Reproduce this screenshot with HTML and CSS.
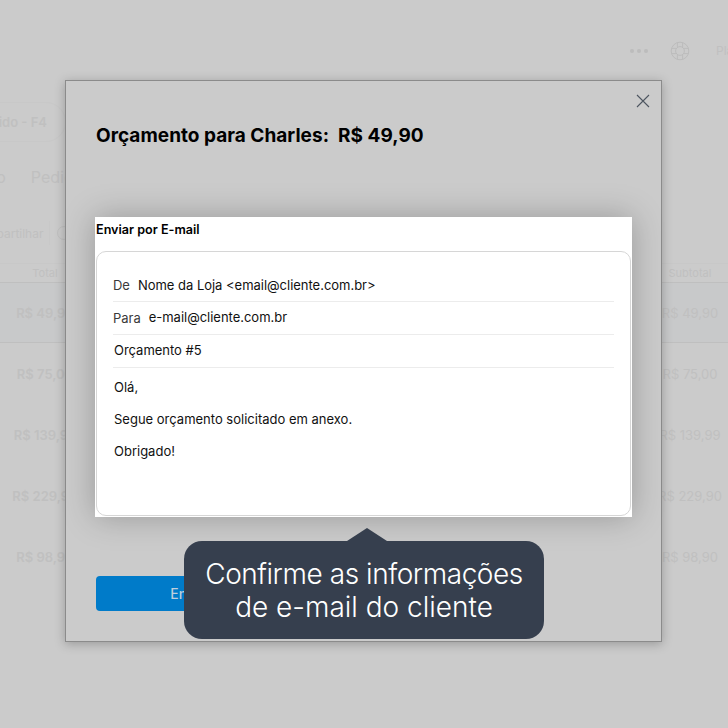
FILE: index.html
```html
<!DOCTYPE html>
<html lang="en">
<head>
	<meta charset="utf-8" />
	<title>Enviar por E-mail</title>
	<link rel="stylesheet" href="styles.css">
</head>
<body>

<!-- app behind the modal, mostly hidden -->
<div class="app">
	<div class="topbar">
		<div class="dots"><span></span><span></span><span></span></div>
		<svg class="buoy" width="20" height="20" viewBox="0 0 20 20" fill="none" stroke="#bcbcbc" stroke-width="1">
			<circle cx="10" cy="10" r="8.8" />
			<circle cx="10" cy="10" r="4.4" />
			<path d="M7.4 6.4V1.6M12.6 6.4V1.6M7.4 13.6v4.8M12.6 13.6v4.8M6.4 7.4H1.6M6.4 12.6H1.6M13.6 7.4h4.8M13.6 12.6h4.8" />
		</svg>
		<span class="plan">Plano</span>
	</div>

	<div class="pill">Novo Pedido - F4</div>

	<div class="tabs">
		<span>Orçamento</span>
		<span>Pedidos</span>
	</div>

	<div class="tools">
		<span>Compartilhar</span>
		<i class="sep"></i>
		<i class="circle"></i>
	</div>

	<div class="row head"><span class="cell">Total</span><span class="cell">Subtotal</span></div>
	<div class="row first"><span class="cell">R$ 49,90</span><span class="cell">R$ 49,90</span></div>
	<div class="row"><span class="cell">R$ 75,00</span><span class="cell">R$ 75,00</span></div>
	<div class="row"><span class="cell">R$ 139,99</span><span class="cell">R$ 139,99</span></div>
	<div class="row"><span class="cell">R$ 229,90</span><span class="cell">R$ 229,90</span></div>
	<div class="row"><span class="cell">R$ 98,90</span><span class="cell">R$ 98,90</span></div>
</div>

<div class="modal">
	<svg class="close" width="14" height="14" viewBox="0 0 14 14" fill="none" stroke="#4d5560" stroke-width="1.1">
		<path d="M1 1l12 12M13 1L1 13" />
	</svg>

	<h2>Orçamento para Charles:&nbsp; R$ 49,90</h2>

	<div class="card">
		<h3>Enviar por E-mail</h3>
		<div class="mail">
			<div class="line"><span class="label">De</span>Nome da Loja &lt;email@cliente.com.br&gt;</div>
			<div class="line"><span class="label low">Para</span>e-mail@cliente.com.br</div>
			<div class="line">Orçamento #5</div>
			<div class="msg">
				<p>Olá,</p>
				<p>Segue orçamento solicitado em anexo.</p>
				<p>Obrigado!</p>
			</div>
		</div>
	</div>

	<button type="button" class="send">Enviar</button>
</div>

<div class="tip"><span class="tip-first">Confirme as informações</span><br />de e-mail do cliente</div>

</body>
</html>
```

FILE: styles.css
```css
* {
	box-sizing: border-box;
}

html, body {
	margin: 0;
	height: 728px;
	overflow: hidden;
}

body {
	position: relative;
	background: #cbcbcb;
	font-family: Inter, "Liberation Sans", sans-serif;
}

/* background app */
.app {
	height: 728px;
	color: #c0c0c0;
	overflow: hidden;
}

.topbar {
	height: 102px;
	padding-top: 41px;
	display: flex;
	align-items: flex-start;
	justify-content: flex-end;
	margin-right: -50px;
}

.dots {
	display: flex;
	gap: 3px;
	margin-top: 8px;
	margin-right: 22px;
}

.dots span {
	width: 4px;
	height: 4px;
	border-radius: 50%;
	background: #bcbcbc;
}

.buoy {
	margin-right: 26px;
}

.plan {
	font-size: 12px;
	line-height: 20px;
	width: 62px;
}

.pill {
	width: 166px;
	height: 40px;
	margin-left: -100px;
	padding-right: 18px;
	border: 1px solid #c8c8c8;
	border-radius: 20px;
	font-size: 13px;
	font-weight: 600;
	line-height: 38px;
	text-align: right;
}

.tabs {
	display: flex;
	gap: 25px;
	height: 34px;
	margin-top: 17px;
	margin-left: -78px;
	font-size: 16px;
	line-height: 36px;
}

.tools {
	display: flex;
	align-items: center;
	height: 40px;
	margin-top: 20px;
	margin-left: -30px;
	font-size: 12px;
}

.sep {
	width: 1px;
	height: 24px;
	margin-left: 6px;
	background: #c8c8c8;
}

.circle {
	width: 14px;
	height: 14px;
	margin-left: 7px;
	border: 1.5px solid #c0c0c0;
	border-radius: 50%;
}

.row {
	display: flex;
	justify-content: space-between;
	height: 61px;
	align-items: center;
	font-size: 13px;
}

.cell {
	width: 90px;
	text-align: center;
	white-space: nowrap;
}

.cell:last-child {
	width: 76px;
}

.row .cell:first-child {
	font-weight: 600;
}

.row.head {
	height: 20px;
	margin-top: 10px;
	font-size: 11px;
	border-top: 1px solid #c8c8c8;
	border-bottom: 1px solid #bfbfbf;
}

.row.head .cell:first-child {
	font-weight: 400;
}

.row.first {
	height: 60px;
	background: #c8c9ca;
	border-bottom: 1px solid #bfbfbf;
}

/* modal */
.modal {
	position: absolute;
	left: 65px;
	top: 80px;
	width: 597px;
	height: 562px;
	padding: 43px 30px 0;
	background: #cbcbcb;
	border: 1px solid #8b8b8b;
	box-shadow: 0 2px 10px rgba(0,0,0,.25);
}

.close {
	position: absolute;
	right: 11px;
	top: 13px;
}

.modal h2 {
	margin: 0;
	color: #000;
	font-size: 19px;
	font-weight: 700;
	letter-spacing: .03px;
	line-height: 24px;
}

.card {
	width: 537px;
	height: 300px;
	margin-top: 69px;
	margin-left: -1px;
	background: #fff;
	box-shadow: 0 0 30px rgba(0,0,0,.25);
}

.card h3 {
	margin: 0;
	height: 34px;
	padding-left: 1px;
	color: #000;
	font-size: 12.6px;
	font-weight: 600;
	line-height: 25px;
}

.mail {
	width: 535px;
	height: 265px;
	margin-left: 1px;
	padding: 17px 16px 0 16px;
	border: 1px solid #d6d6d6;
	border-radius: 10px;
	color: #111;
	font-size: 13px;
}

.line {
	height: 33px;
	line-height: 32px;
	border-bottom: 1px solid #ececec;
	letter-spacing: -.02px;
}

.line:nth-child(2) {
	line-height: 31px;
}

.line:nth-child(3) {
	padding-left: 1px;
	line-height: 31px;
}

.label {
	margin-right: 8px;
	color: #3a3a3a;
}

.label.low {
	position: relative;
	top: 1px;
}

.msg {
	padding: 3px 0 0 1px;
}

.msg p {
	margin: 0;
	height: 32px;
	line-height: 32px;
}

.send {
	display: block;
	width: 192px;
	height: 35px;
	margin-top: 59px;
	padding: 0 2px 0 0;
	border: 0;
	border-radius: 4px;
	background: #007bc9;
	color: #bfcfdc;
	font-family: inherit;
	font-size: 14px;
	font-weight: 500;
}

/* tooltip over everything */
.tip {
	position: absolute;
	left: 184px;
	top: 541px;
	width: 360px;
	height: 98px;
	padding-top: 17px;
	background: #363f4e;
	border-radius: 18px;
	color: #fff;
	font-size: 28px;
	font-weight: 300;
	line-height: 33px;
	text-align: center;
}

.tip-first {
	letter-spacing: -.45px;
}

.tip::before {
	content: "";
	position: absolute;
	left: 163px;
	top: -13px;
	border-left: 20px solid transparent;
	border-right: 20px solid transparent;
	border-bottom: 13px solid #363f4e;
}
```
